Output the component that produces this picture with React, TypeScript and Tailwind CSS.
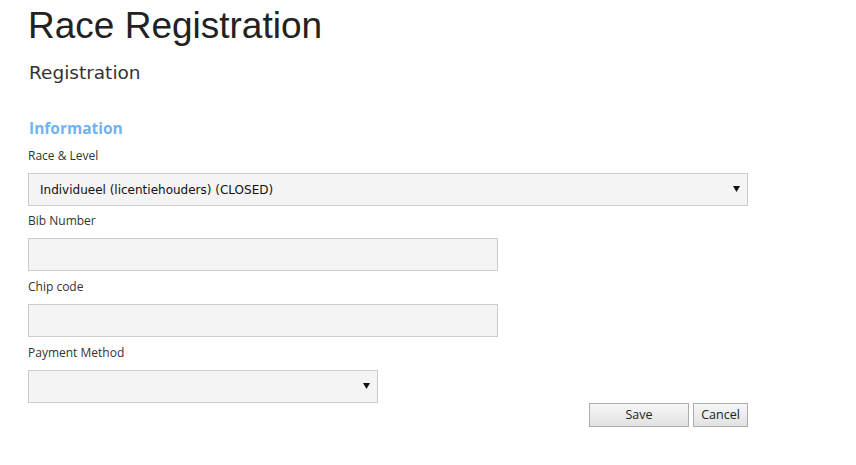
import { ChangeEvent, useState } from "react";

const labelCls = "block text-[12px] text-[#333] font-['Open_Sans',sans-serif] leading-[16px]";
const fieldCls = "h-[33px] bg-[#f4f4f4] border border-[#cccccc] outline-none";

function Caret() {
  return (
    <svg width="7" height="6" viewBox="0 0 7 6" className="absolute right-[8px] top-[13px]">
      <path d="M0 0 H7 L3.5 6 Z" fill="#111" />
    </svg>
  );
}

export default function App() {
  const [race, setRace] = useState("ind");
  const onRace = (e: ChangeEvent<HTMLSelectElement>) => setRace(e.target.value);

  return (
    <div className="w-[856px] h-[465px] bg-white px-[28px] text-[#222]">
      <h1 className="pt-[4px] text-[37px] leading-[44px] font-['Liberation_Sans',Arial,sans-serif] text-[#222]">
        Race Registration
      </h1>
      <h2 className="mt-[14px] text-[18.5px] leading-[22px] font-['DejaVu_Sans',Verdana,sans-serif] text-[#333] pl-[1px]">
        Registration
      </h2>

      <div className="w-[720px] mt-[34px]">
        <h3 className="text-[15.5px] leading-[20px] font-bold text-[#6fb3ee] font-['Open_Sans',sans-serif] pl-[1px]">
          Information
        </h3>

        <label className={`${labelCls} mt-[10px]`}>Race &amp; Level</label>
        <div className="relative mt-[9px]">
          <select
            value={race}
            onChange={onRace}
            className={`${fieldCls} w-full appearance-none pl-[11px] text-[12px] text-[#111] font-['DejaVu_Sans',Verdana,sans-serif]`}
          >
            <option value="ind">Individueel (licentiehouders) (CLOSED)</option>
          </select>
          <Caret />
        </div>

        <label className={`${labelCls} mt-[7px]`}>Bib Number</label>
        <input className={`${fieldCls} mt-[9px] w-[470px] block`} />

        <label className={`${labelCls} mt-[8px]`}>Chip code</label>
        <input className={`${fieldCls} mt-[9px] w-[470px] block`} />

        <label className={`${labelCls} mt-[8px]`}>Payment Method</label>
        <div className="relative mt-[9px] w-[350px]">
          <select className={`${fieldCls} w-full appearance-none`}>
            <option value=""></option>
          </select>
          <Caret />
        </div>

        <div className="flex justify-end gap-[4px]">
          <button className="w-[100px] h-[24px] border border-[#adadad] bg-gradient-to-b from-[#f6f6f6] to-[#e2e2e2] text-[12.5px] text-[#222] font-['Open_Sans',sans-serif]">
            Save
          </button>
          <button className="w-[55px] h-[24px] border border-[#adadad] bg-gradient-to-b from-[#f6f6f6] to-[#e2e2e2] text-[12.5px] text-[#222] font-['Open_Sans',sans-serif]">
            Cancel
          </button>
        </div>
      </div>
    </div>
  );
}
